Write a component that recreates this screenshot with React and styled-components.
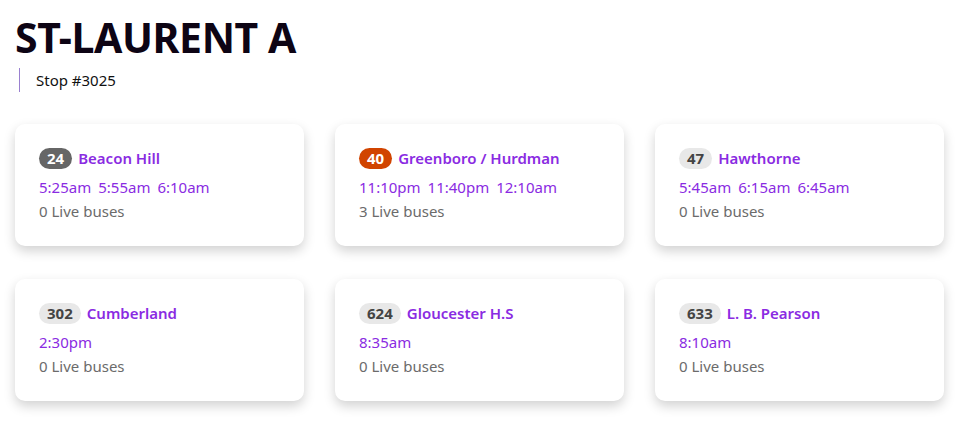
import styled, { createGlobalStyle } from "styled-components";

const routes = [
  { num: "24", name: "Beacon Hill", times: ["5:25am", "5:55am", "6:10am"], live: 0, tone: "dark" },
  { num: "40", name: "Greenboro / Hurdman", times: ["11:10pm", "11:40pm", "12:10am"], live: 3, tone: "orange" },
  { num: "47", name: "Hawthorne", times: ["5:45am", "6:15am", "6:45am"], live: 0, tone: "light" },
  { num: "302", name: "Cumberland", times: ["2:30pm"], live: 0, tone: "light" },
  { num: "624", name: "Gloucester H.S", times: ["8:35am"], live: 0, tone: "light" },
  { num: "633", name: "L. B. Pearson", times: ["8:10am"], live: 0, tone: "light" },
];

const tones = {
  dark: { bg: "#666666", fg: "#ffffff" },
  orange: { bg: "#d14400", fg: "#ffffff" },
  light: { bg: "#e8e8e8", fg: "#444444" },
};

const App = () => {
  return (
    <>
      <GlobalStyle />
      <Page>
        <Title>ST-LAURENT A</Title>
        <StopLine>Stop #3025</StopLine>
        <Grid>
          {routes.map((r) => (
            <Card key={r.num}>
              <Header>
                <Badge $tone={r.tone}>{r.num}</Badge>
                <RouteName>{r.name}</RouteName>
              </Header>
              <Times>
                {r.times.map((t) => (
                  <span key={t}>{t}</span>
                ))}
              </Times>
              <Live>{r.live} Live buses</Live>
            </Card>
          ))}
        </Grid>
      </Page>
    </>
  );
};

export default App;

const GlobalStyle = createGlobalStyle`
  body {
    margin: 0;
    background: #ffffff;
    font-family: "Noto Sans", "Open Sans", sans-serif;
  }
`;

const Page = styled.div`
  padding: 8px 26px 28px 15px;
`;

const Title = styled.h1`
  margin: 0;
  font-size: 41px;
  font-weight: 700;
  color: #0d0414;
  line-height: 58px;
  letter-spacing: -0.4px;
`;

const StopLine = styled.div`
  margin: 2px 0 0 4px;
  border-left: 1px solid #9a80d0;
  padding-left: 16px;
  height: 24px;
  line-height: 24px;
  font-size: 15px;
  color: #111;
`;

const Grid = styled.div`
  display: grid;
  grid-template-columns: repeat(3, 289px);
  column-gap: 31px;
  row-gap: 33px;
  margin-top: 32px;
`;

const Card = styled.div`
  height: 122px;
  box-sizing: border-box;
  padding: 22px 24px;
  background: #fff;
  border-radius: 10px;
  box-shadow: 0 5px 12px rgba(0, 0, 0, 0.18);
`;

const Header = styled.div`
  display: flex;
  align-items: center;
  gap: 6px;
  height: 24px;
`;

const Badge = styled.span`
  display: inline-flex;
  align-items: center;
  justify-content: center;
  height: 21px;
  padding: 0 8px;
  border-radius: 11px;
  font-size: 15px;
  font-weight: 700;
  background: ${(p) => tones[p.$tone].bg};
  color: ${(p) => tones[p.$tone].fg};
`;

const RouteName = styled.span`
  font-size: 15px;
  font-weight: 600;
  color: #8a2be2;
`;

const Times = styled.div`
  display: flex;
  gap: 7px;
  margin-top: 6px;
  font-size: 15px;
  line-height: 22px;
  color: #8a2be2;
`;

const Live = styled.div`
  margin-top: 2px;
  font-size: 15px;
  line-height: 22px;
  color: #6b6b6b;
`;
